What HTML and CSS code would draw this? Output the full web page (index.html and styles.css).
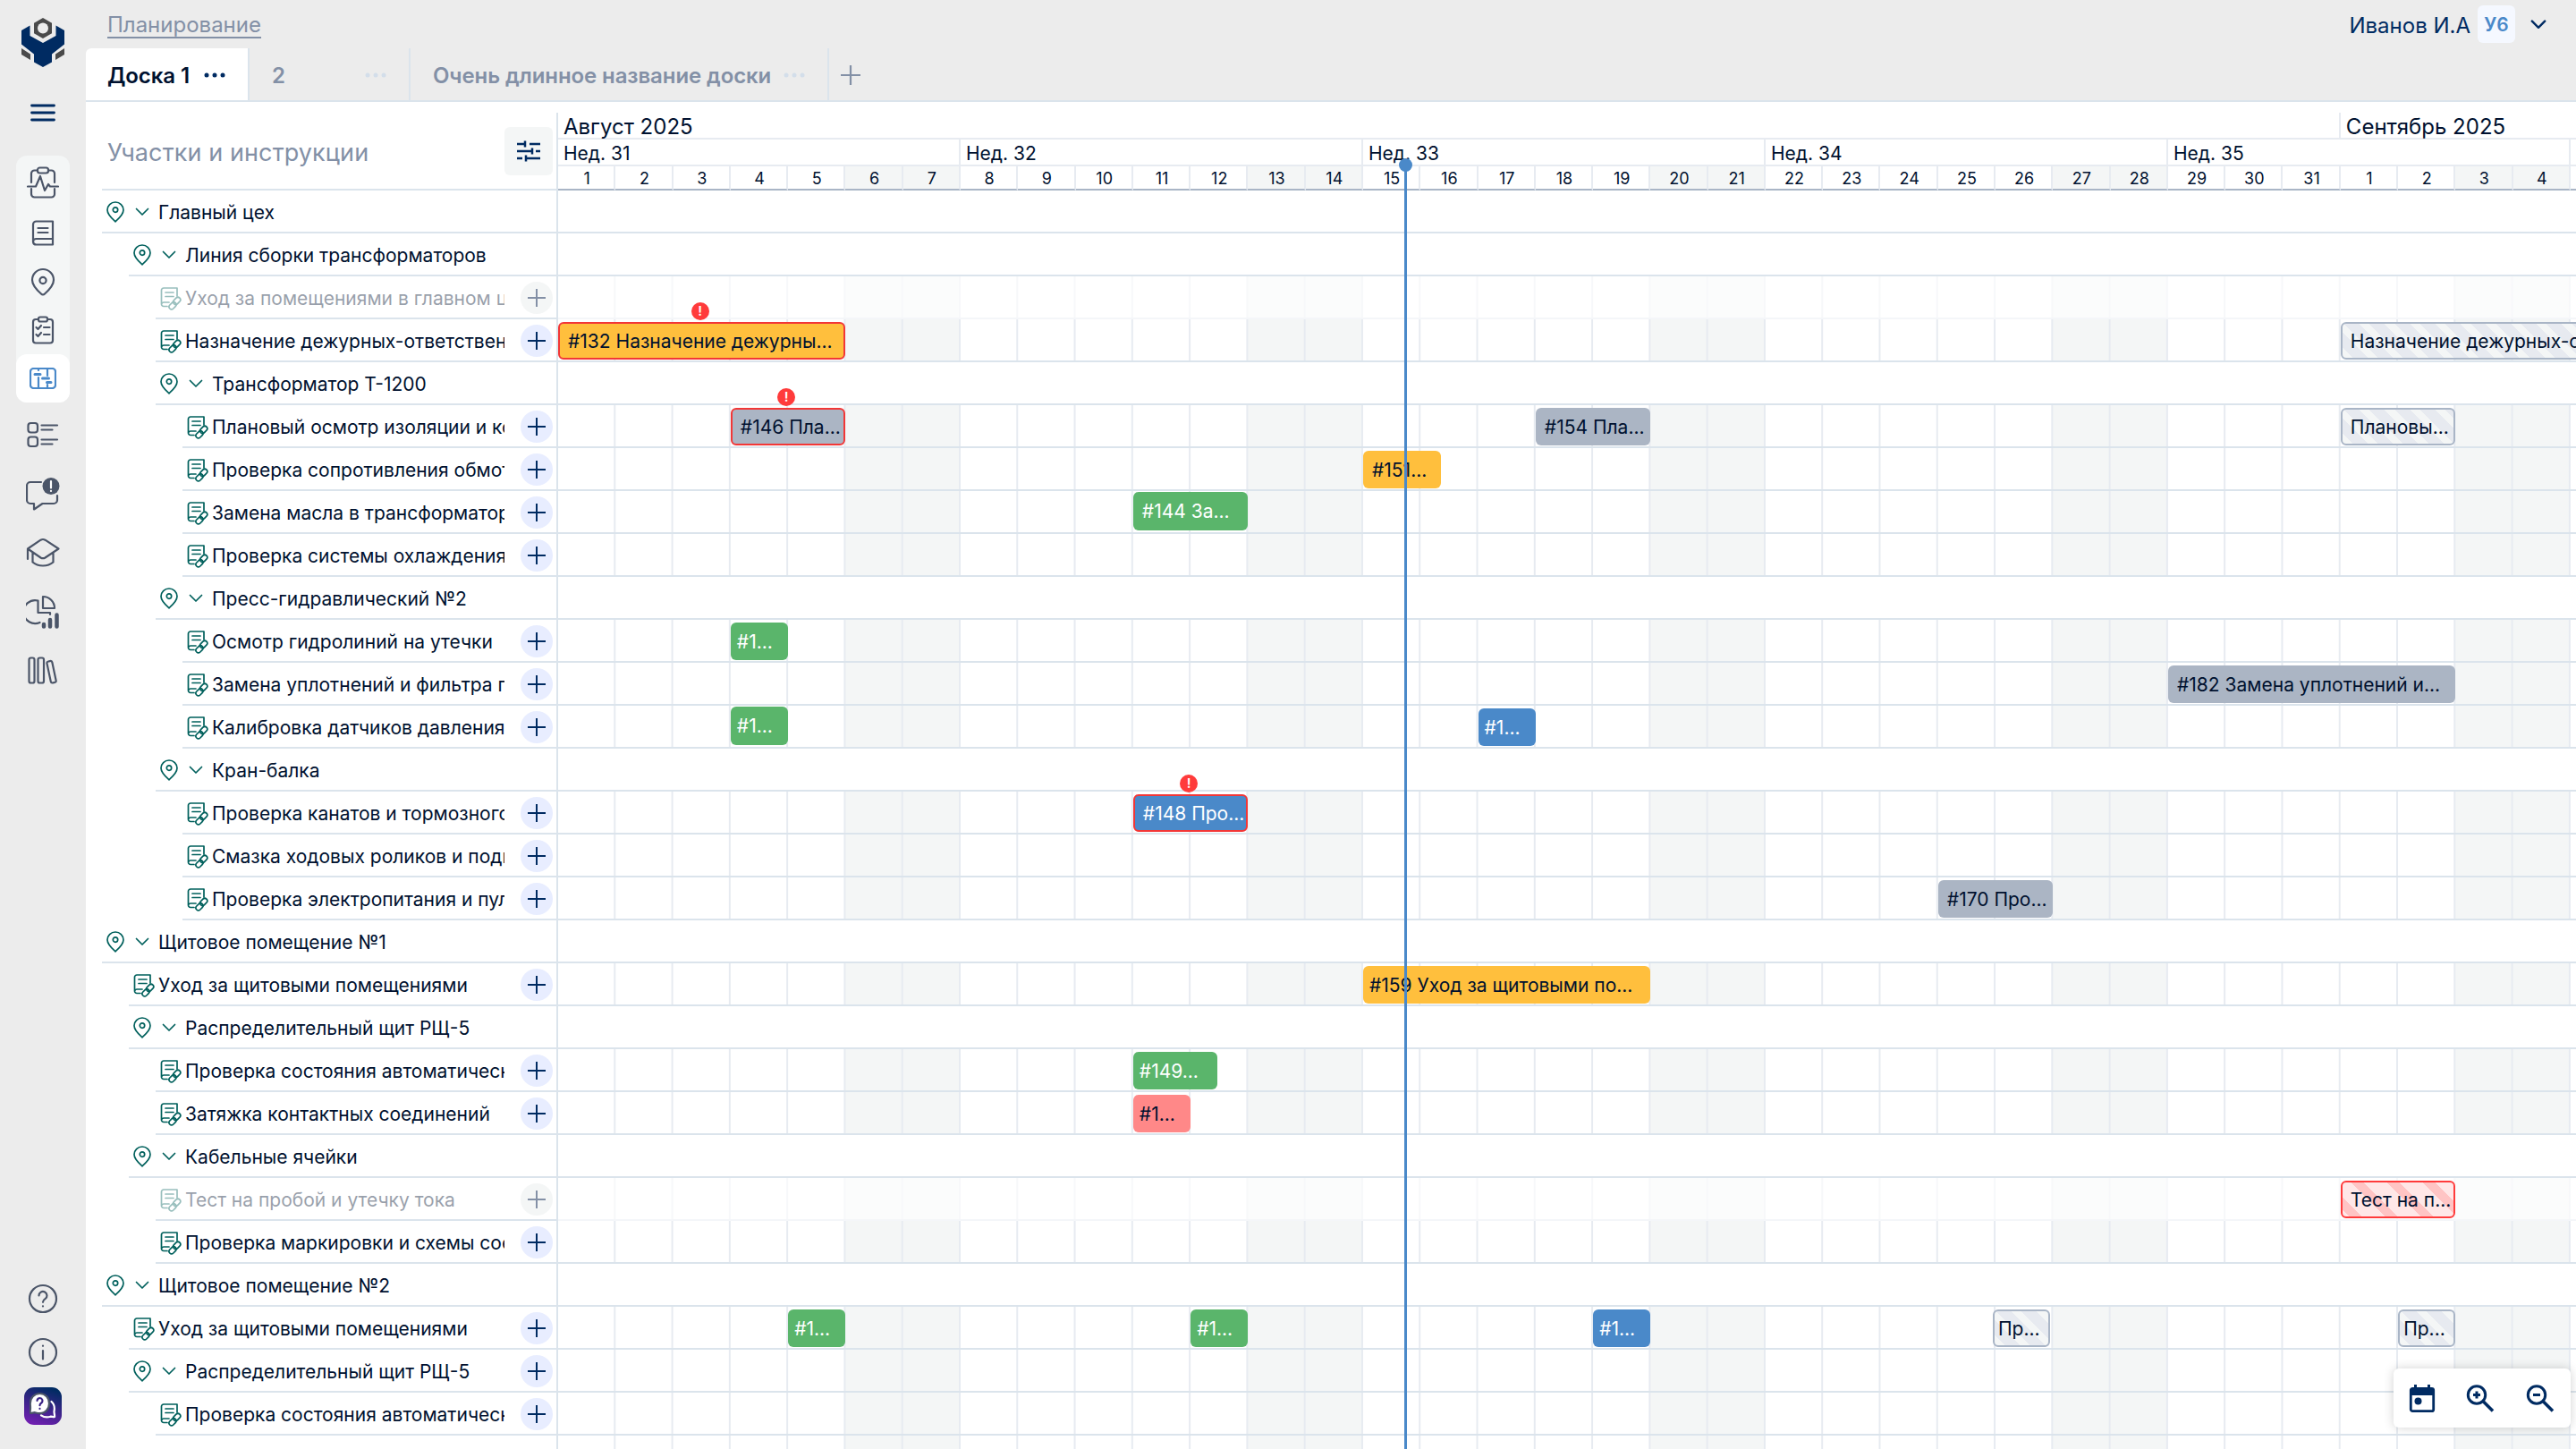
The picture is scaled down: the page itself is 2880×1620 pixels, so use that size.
FILE: index.html
```html
<!DOCTYPE html>
<html lang="ru">
<head>
    <meta charset="UTF-8">
    <meta name="viewport" content="width=device-width, initial-scale=1.0">
    <title>Планирование</title>
    <link rel="stylesheet" href="styles.css">
</head>
<body>
    <svg width="0" height="0" class="sprite">
        <symbol id="i-pin" viewBox="0 0 20 24">
            <path d="M10 22.8C7.5 20.6 1 15 1 9.8a9 8.8 0 0 1 18 0c0 5.200-6.500 10.800-9 13z"/>
            <circle cx="10" cy="9.600" r="2.700"/>
        </symbol>
        <symbol id="i-down" viewBox="0 0 16 10"><path d="M1.500 1.500 8 8l6.500-6.500"/></symbol>
        <symbol id="i-doc" viewBox="0 0 24 26">
            <path d="M8 21.500H4A2.500 2.500 0 0 1 1.500 19V3.500A2.500 2.500 0 0 1 4 1h15v9M1.800 18.500A2.500 2.500 0 0 1 4 17h6M6 6h9M6 10.500h9"/>
            <rect x="14.200" y="12.600" width="9" height="5.600" rx="2.800" transform="rotate(-45 18.700 15.400)"/>
            <rect x="9.500" y="18" width="9" height="5.600" rx="2.800" transform="rotate(-45 14 20.800)"/>
        </symbol>
        <symbol id="i-plus" viewBox="0 0 20 20"><path d="M10 .5v19M.5 10h19"/></symbol>
        <symbol id="i-dots" viewBox="0 0 24 6"><circle cx="3" cy="3" r="2.500"/><circle cx="12" cy="3" r="2.500"/><circle cx="21" cy="3" r="2.500"/></symbol>
    </svg>

    <div class="app">
        <aside class="sidebar">
            <svg class="logo" width="48" height="56" viewBox="0 0 48 56">
                <path d="M24 0 34 5.800v11.500L24 23l-10-5.700V5.800z" fill="#4a4a4a"/>
                <circle cx="24" cy="11.500" r="6" fill="#ececec"/>
                <path d="M0 14 9.500 8.500V20L24 28l14.500-8V8.500L48 14v15.500L34 40.500V49.500L24 55l-10-5.500v-9L0 29.500z" fill="#002b62"/>
                <path d="M0 34l10 6.500v6.500L0 41zM48 34l-10 6.500v6.500L48 41z" fill="#4a4a4a"/>
            </svg>
            <svg class="burger" width="28" height="22" viewBox="0 0 28 22"><path d="M1.500 2h25M1.500 10h25M1.500 18h25"/></svg>
            <nav class="nav-group">
                <a class="nav-item first">
                    <svg width="36" height="36" viewBox="0 0 36 36"><path d="M5 18V8a3.500 3.500 0 0 1 3.500-3.500H12M24 4.500h3.500A3.500 3.500 0 0 1 31 8v10M5 25v6a3.500 3.500 0 0 0 3.500 3.500h19A3.500 3.500 0 0 0 31 31v-6M1 22.500h9l5-11.500 5 16 4-7 2 2.500h9"/><rect x="12" y="1.500" width="12" height="6" rx="2.500"/></svg>
                </a>
                <a class="nav-item">
                    <svg width="26" height="30" viewBox="0 0 26 30"><path d="M2 24.500V5a3.500 3.500 0 0 1 3.500-3.500H24v26H5.500A3.500 3.500 0 0 1 2 24.500a3.500 3.500 0 0 1 3.500-3.500H24M7.500 9h11M7.500 14h11"/></svg>
                </a>
                <a class="nav-item">
                    <svg width="28" height="32" viewBox="0 0 28 32"><path d="M16 29.500c-1.200 1.200-2.800 1.200-4 0C7.500 25.500 2 20.500 2 14a12 12 0 0 1 24 0c0 6.500-5.500 11.500-10 15.500z"/><circle cx="14" cy="14.500" r="3.600"/></svg>
                </a>
                <a class="nav-item">
                    <svg width="26" height="32" viewBox="0 0 26 32"><path d="M8 4H5a3 3 0 0 0-3 3v20.500a3 3 0 0 0 3 3h16a3 3 0 0 0 3-3V7a3 3 0 0 0-3-3h-3M5.500 13l2 2 3.500-4M14 13h6.500M5.500 21l2 2 3.500-4M14 21h6.500"/><rect x="8" y="1.500" width="10" height="5" rx="2"/></svg>
                </a>
                <a class="nav-item active">
                    <svg width="30" height="24" viewBox="0 0 30 24"><rect x="1" y="1" width="28" height="22" rx="3.500"/><path d="M10 1v2M10 11v12M20 1v8M20 19v4" /><path d="M6 7.500h6M14.500 12h7M19.500 16.500h4.500" stroke-width="3"/></svg>
                </a>
            </nav>
            <nav class="nav-list">
                <a><svg width="36" height="30" viewBox="0 0 36 30"><rect x="1.500" y="2" width="10.500" height="10.500" rx="3"/><rect x="1.500" y="17.500" width="10.500" height="10.500" rx="3"/><path d="M16.500 4.500H34M16.500 9.500h12M16.500 20.500H34M16.500 25.500h12"/></svg></a>
                <a><svg width="38" height="38" viewBox="0 0 38 38"><path d="M17 6H5a4 4 0 0 0-4 4v16a4 4 0 0 0 4 4h4v6.500L18.500 30H31a4 4 0 0 0 4-4v-5"/><circle cx="28" cy="10.500" r="9.500" class="solid"/><path d="M28 5v7.500M28 15.800v.2" stroke="#fff"/></svg></a>
                <a><svg width="38" height="34" viewBox="0 0 38 34"><path d="M2 24V12.500L16.500 2.700q2.500-1.400 5 0L36.500 12.500 21.500 22.500q-2.500 1.400-5 0L2 12.500M7.500 17v10.500c6 5.300 17 5.300 23 0V17"/></svg></a>
                <a><svg width="38" height="38" viewBox="0 0 38 38"><path d="M13.500 6.500A13 13 0 1 0 15.500 31M13.500 6.500V20H27v2"/><path d="M19 2v13h13A13 13 0 0 0 19 2z"/><path d="M20 33v2.500M27 28v7.500M34.500 22.500v13" stroke-width="4.500"/></svg></a>
                <a><svg width="34" height="32" viewBox="0 0 34 32"><rect x="1.500" y="1.500" width="6" height="28" rx="2"/><rect x="11.500" y="1.500" width="6.500" height="28" rx="2"/><rect x="23.500" y="5" width="6" height="24.500" rx="2" transform="rotate(-12 26.500 17)"/></svg></a>
            </nav>
            <div class="nav-bottom">
                <svg width="34" height="34" viewBox="0 0 34 34"><circle cx="17" cy="17" r="15"/><path d="M12.500 13.500a4.500 4.500 0 1 1 7 3.700c-1.800 1.200-2.500 1.800-2.500 3.600M17 25.300v.2"/></svg>
                <svg width="34" height="34" viewBox="0 0 34 34"><circle cx="17" cy="17" r="15"/><path d="M17 15v9.500M17 9.500v.3"/></svg>
                <div class="support">
                    <svg width="30" height="30" viewBox="0 0 30 30"><path d="M11.500 1C5 1 .8 6 .8 12c0 3 .5 5 0 7.500-.3 2-.3 3.500.7 3.500s3-.8 4.500-.8c2 .6 3.500 1 5.500 1C18 23.200 22 18 22 12S18 1 11.500 1z" fill="#fff"/><path d="M24.500 10c4 3.500 3.500 8.500 3 11 0 2 .8 4.500.5 6-1.500.5-3-.5-4.500-.3-4 1.400-7.500.8-10.500-1.400" stroke="#fff"/><path d="M8.500 9a3 3 0 1 1 4.700 2.500c-1.300.9-1.700 1.300-1.700 2.700M11.500 17.800v.2" stroke="#3a2286"/></svg>
                </div>
            </div>
        </aside>

        <main class="main">
            <header class="topbar">
                <a class="page-title">Планирование</a>
                <div class="user">
                    <span class="user-name">Иванов И.А</span>
                    <span class="avatar">У6</span>
                    <svg class="user-arrow" width="18" height="11"><use href="#i-down"/></svg>
                </div>
            </header>

            <div class="tabs">
                <div class="tab active">Доска 1 <svg width="24" height="6"><use href="#i-dots"/></svg></div>
                <div class="tab short">2 <svg width="24" height="6"><use href="#i-dots"/></svg></div>
                <div class="tab long">Очень длинное название доски <svg width="24" height="6"><use href="#i-dots"/></svg></div>
                <svg class="add-tab" width="22" height="22"><use href="#i-plus"/></svg>
            </div>

            <div class="board">
                <section class="tree">
                    <div class="tree-head">
                        <span>Участки и инструкции</span>
                        <button class="filter-btn">
                            <svg width="28" height="24" viewBox="0 0 28 24"><path d="M1 4h9M15 4h12M10 .5v7M1 12h16M22 12h5M18 8.500v7M1 20h6M12 20h15M11 16.500v7"/></svg>
                        </button>
                    </div>
                    <div id="tree"></div>
                </section>
                <section class="timeline">
                    <div class="months"><div class="month august">Август 2025</div><div class="month">Сентябрь 2025</div></div>
                    <div class="weeks" id="weeks"></div>
                    <div class="days" id="days"></div>
                    <div id="rows"></div>
                    <div class="now"></div>
                </section>
            </div>
        </main>
    </div>

    <div class="toolbar">
        <svg width="30" height="34" viewBox="0 0 30 34"><path d="M7.500 1v5M22.500 1v5" stroke-width="3"/><rect x="2.300" y="5.300" width="25.400" height="25.400" rx="2" stroke-width="2.800"/><path d="M2 5h26v8H2z" class="fill"/><circle cx="10.500" cy="19.500" r="4" class="fill"/></svg>
        <svg width="34" height="34" viewBox="0 0 34 34"><circle cx="13" cy="12.500" r="9.700" stroke-width="3"/><path d="m20 19.500 11 11" stroke-width="3.600"/><path d="M13 8.500v8M9 12.500h8" stroke-width="3"/></svg>
        <svg width="34" height="34" viewBox="0 0 34 34"><circle cx="13" cy="12.500" r="9.700" stroke-width="3"/><path d="m20 19.500 11 11" stroke-width="3.600"/><path d="M9 12.500h8" stroke-width="3"/></svg>
    </div>

    <script src="script.js"></script>
</body>
</html>
```

FILE: styles.css
```css
* {
    box-sizing: border-box;
}
body {
    margin: 0;
    height: 100vh;
    overflow: hidden;
    background-color: #ececec;
    color: #00112f;
    font-family: Inter, "Noto Sans", sans-serif;
    font-size: 21px;
}
svg {
    display: block;
    flex-shrink: 0;
    fill: none;
    stroke: currentColor;
    stroke-width: 2;
    stroke-linecap: round;
    stroke-linejoin: round;
}
.sprite {
    position: absolute;
}
.app {
    display: flex;
    height: 100vh;
}

/* Боковое меню */
.sidebar {
    width: 96px;
    height: 100%;
    display: flex;
    flex-direction: column;
    align-items: center;
    padding: 20px 0 27px;
    color: #4b5568;
}
.sidebar svg {
    stroke-width: 2.200;
}
.sidebar .logo {
    stroke: none;
}
.sidebar .burger {
    margin-top: 40px;
    color: #002b62;
    stroke-width: 2.800;
}
.nav-group {
    width: 60px;
    margin-top: 36px;
    background-color: #f4f6f6;
    border-radius: 12px;
}
.nav-item {
    height: 54px;
    display: flex;
    align-items: center;
    justify-content: center;
}
.nav-item.first {
    height: 60px;
}
.nav-item.active {
    background-color: #ffffff;
    border-radius: 12px;
    color: #4a89c9;
}
.nav-list {
    margin-top: 3px;
}
.nav-list a {
    height: 66px;
    display: flex;
    align-items: center;
    justify-content: center;
}
.nav-list .solid {
    fill: currentColor;
    stroke: none;
}
.nav-bottom {
    margin-top: auto;
    display: flex;
    flex-direction: column;
    align-items: center;
    gap: 26px;
}
.nav-bottom .support {
    margin-top: -4px;
    width: 42px;
    height: 42px;
    border-radius: 11px;
    background: linear-gradient(20deg, #7a1fb8 0%, #3a2488 50%, #002b62 90%);
    display: flex;
    align-items: center;
    justify-content: center;
}

/* Шапка */
.main {
    flex: 1;
    min-width: 0;
    display: flex;
    flex-direction: column;
}
.topbar {
    height: 54px;
    display: flex;
    justify-content: space-between;
    padding: 6px 33px 0 24px;
    font-size: 24px;
}
.page-title {
    align-self: flex-start;
    height: 37px;
    line-height: 44px;
    color: #8390a6;
    border-bottom: 2px solid #8390a6;
}
.user {
    display: flex;
    align-items: center;
    height: 42px;
    color: #002b62;
}
.user-name {
    padding-top: 2px;
}
.avatar {
    width: 42px;
    height: 42px;
    margin: 0 17px 0 8px;
    line-height: 43px;
    text-align: center;
    font-size: 21px;
    font-weight: 600;
    color: #4a89c9;
    background-color: #f5f8ff;
    border-radius: 6px;
}
.user-arrow {
    stroke-width: 2.200;
}
.tabs {
    height: 60px;
    display: flex;
    border-bottom: 2px solid #dbe4ec;
    font-size: 24px;
    font-weight: 600;
    letter-spacing: -0.1px;
    color: #8390a6;
}
.tab {
    display: flex;
    align-items: center;
    justify-content: space-between;
    padding: 2px 25px 0 25px;
    border-right: 2px solid #dbe4ec;
}
.tab svg {
    fill: currentColor;
    stroke: none;
    color: #d3deea;
}
.tab.active {
    width: 183px;
    padding-left: 24px;
    background-color: #ffffff;
    color: #00112f;
    border-top-left-radius: 6px;
}
.tab.active svg {
    color: #002b62;
}
.tab.short {
    width: 180px;
}
.tab.long {
    width: 468px;
}
.add-tab {
    margin: 19px 0 0 13px;
}

/* Дерево участков */
.board {
    flex: 1;
    min-height: 0;
    display: flex;
    padding-top: 12px;
    background-color: #ffffff;
}
.tree {
    width: 528px;
    padding-left: 18px;
    border-right: 2px solid #dbe4ec;
}
.tree-head {
    height: 87px;
    display: flex;
    align-items: center;
    justify-content: space-between;
    padding: 1px 4px 0 6px;
    border-bottom: 2px solid #dbe4ec;
    font-size: 27px;
    letter-spacing: 0.1px;
    color: #8390a6;
}
.tree-head span {
    padding-top: 2px;
}
.filter-btn {
    width: 54px;
    height: 54px;
    padding: 0;
    display: flex;
    align-items: center;
    justify-content: center;
    border: none;
    border-radius: 6px;
    background-color: #f4f6f6;
    color: #002b62;
}
.filter-btn svg {
    stroke-width: 2.500;
    stroke-linecap: butt;
}
.node {
    height: 48px;
    display: flex;
    align-items: center;
    padding: 1px 4px 0 5px;
    border-bottom: 2px solid #dbe4ec;
}
.level-1 {
    margin-left: 30px;
}
.level-2 {
    margin-left: 60px;
}
.level-3 {
    margin-left: 90px;
}
.node svg {
    color: #00605c;
    stroke-width: 1.700;
}
.node .pin {
    width: 20px;
    height: 24px;
}
.node .down {
    width: 16px;
    height: 10px;
    margin: 0 10px 0 12px;
}
.node .doc {
    width: 24px;
    height: 26px;
    margin: 2px 4px 0 0;
}
.node-name {
    flex: 1;
    min-width: 0;
    margin-right: 18px;
    padding-top: 2px;
    overflow: hidden;
    white-space: nowrap;
    line-height: 40px;
}
.add-btn {
    width: 36px;
    height: 36px;
    display: flex;
    align-items: center;
    justify-content: center;
    border-radius: 50%;
    background-color: #e8edff;
}
.add-btn svg {
    width: 20px;
    height: 20px;
    color: #002b62;
    stroke-width: 2;
}
.node.off .doc,
.node.off .node-name {
    opacity: 0.4;
}
.node.off .add-btn {
    background-color: #f4f6f6;
}
.node.off .add-btn svg {
    color: #8390a6;
}

/* Шкала времени */
.timeline {
    flex: 1;
    min-width: 0;
    position: relative;
    overflow: hidden;
}
.months,
.weeks,
.days {
    display: flex;
    white-space: nowrap;
}
.month {
    width: 600px;
    height: 30px;
    flex-shrink: 0;
    padding-left: 6px;
    line-height: 32px;
    font-size: 24px;
    border-bottom: 2px solid #e7ebf1;
}
.month.august {
    width: 1992.860px;
    border-right: 2px solid #e7ebf1;
}
.week {
    width: 450px;
    height: 30px;
    flex-shrink: 0;
    padding-left: 6px;
    line-height: 32px;
    border-right: 2px solid #e7ebf1;
    border-bottom: 2px solid #e7ebf1;
}
.day {
    width: 64.286px;
    height: 27px;
    flex-shrink: 0;
    padding-left: 2px;
    line-height: 27px;
    text-align: center;
    font-size: 18px;
    border-right: 2px solid #e7ebf1;
    border-bottom: 2px solid #a9b5c6;
}
.day.weekend {
    background-color: #f4f6f6;
}
.row {
    position: relative;
    height: 48px;
}
.grid {
    height: 48px;
    border-bottom: 2px solid #dbe4ec;
}
.grid.cells {
    background-image:
        linear-gradient(to right, transparent 62.286px, #e7ebf1 62.286px),
        linear-gradient(to right, transparent 321.430px, #f4f6f6 321.430px);
    background-size: 64.286px 100%, 450px 100%;
}
.grid.off {
    opacity: 0.3;
}
.bar {
    position: absolute;
    top: 3px;
    height: 42px;
    padding-left: 10px;
    border-radius: 6px;
    line-height: 43px;
    white-space: nowrap;
    z-index: 1;
}
.bar.small {
    padding-left: 7px;
}
.bar.up {
    top: 1px;
    height: 43px;
}
.bar.yellow {
    background-color: #ffbf3d;
}
.bar.gray {
    background-color: #abb5c4;
}
.bar.green {
    background-color: #5ab56b;
    color: #ffffff;
}
.bar.blue {
    background-color: #4a89c9;
    color: #ffffff;
}
.bar.red {
    background-color: #ff8888;
}
.bar.plan {
    border: 2px solid #a9b5c6;
    background: repeating-linear-gradient(45deg, #f4f6f6 0 8px, #e7eaf0 8px 20px);
}
.bar.plan-late {
    border: 2px solid #ff3b3b;
    background: repeating-linear-gradient(45deg, #ffe7e7 0 5px, #ffc4c4 5px 15.500px, #ffe7e7 15.500px 28.300px);
}
.bar.late {
    border: 2px solid #f23737;
}
.bar.late,
.bar.plan,
.bar.plan-late {
    padding-left: 9px;
    line-height: 39px;
}
.bar.plan.small {
    padding-left: 4px;
}
.alert {
    position: absolute;
    top: -24px;
    left: 50%;
    width: 20px;
    height: 20px;
    margin-left: -12px;
    border-radius: 50%;
    background-color: #ff3b3b;
    color: #ffffff;
    font-size: 15px;
    font-weight: 600;
    line-height: 20px;
    text-align: center;
}
.now {
    position: absolute;
    top: 59px;
    bottom: 0;
    left: 946px;
    width: 3px;
    background-color: #4a89c9;
    z-index: 2;
}
.now::before {
    content: "";
    position: absolute;
    top: -8px;
    left: -6px;
    width: 15px;
    height: 15px;
    border-radius: 50%;
    background-color: #4a89c9;
}
.toolbar {
    position: absolute;
    right: 6px;
    bottom: 24px;
    width: 198px;
    height: 66px;
    display: flex;
    align-items: center;
    justify-content: space-around;
    padding-top: 1px;
    background-color: #ffffff;
    border-radius: 6px;
    box-shadow: 0 0 12px rgba(0, 0, 0, 0.18);
    color: #002b62;
    z-index: 3;
}
.toolbar svg {
    stroke-linecap: butt;
}
.toolbar .fill {
    fill: currentColor;
    stroke: none;
}
```

FILE: script.js
```js
const DAY = 450 / 7;

// bars: [начало, длительность в днях, текст, классы]
const rows = [
    { level: 0, place: true, name: 'Главный цех' },
    { level: 1, place: true, name: 'Линия сборки трансформаторов' },
    { level: 2, name: 'Уход за помещениями в главном цехе', off: true },
    { level: 2, name: 'Назначение дежурных-ответственных', bars: [
        [0, 5, '#132 Назначение дежурны...', 'yellow late'],
        [31, 6, 'Назначение дежурных-ответственных', 'plan']
    ] },
    { level: 2, place: true, name: 'Трансформатор Т-1200' },
    { level: 3, name: 'Плановый осмотр изоляции и контактов', bars: [
        [3, 2, '#146 Пла...', 'gray late'],
        [17, 2, '#154 Пла...', 'gray'],
        [31, 2, 'Плановы...', 'plan']
    ] },
    { level: 3, name: 'Проверка сопротивления обмоток', bars: [[14, 1.36, '#151...', 'yellow']] },
    { level: 3, name: 'Замена масла в трансформаторе', bars: [[10, 2, '#144 За...', 'green up']] },
    { level: 3, name: 'Проверка системы охлаждения' },
    { level: 2, place: true, name: 'Пресс-гидравлический №2' },
    { level: 3, name: 'Осмотр гидролиний на утечки', bars: [[3, 1, '#1...', 'green small']] },
    { level: 3, name: 'Замена уплотнений и фильтра гидравлики', bars: [[28, 5, '#182 Замена уплотнений и...', 'gray']] },
    { level: 3, name: 'Калибровка датчиков давления', bars: [
        [3, 1, '#1...', 'green small up'],
        [16, 1, '#1...', 'blue small']
    ] },
    { level: 2, place: true, name: 'Кран-балка' },
    { level: 3, name: 'Проверка канатов и тормозного механизма', bars: [[10, 2, '#148 Про...', 'blue late']] },
    { level: 3, name: 'Смазка ходовых роликов и подшипников' },
    { level: 3, name: 'Проверка электропитания и пульта', bars: [[24, 2, '#170 Про...', 'gray']] },
    { level: 0, place: true, name: 'Щитовое помещение №1' },
    { level: 1, name: 'Уход за щитовыми помещениями', bars: [[14, 5, '#159 Уход за щитовыми по...', 'yellow small']] },
    { level: 1, place: true, name: 'Распределительный щит РЩ-5' },
    { level: 2, name: 'Проверка состояния автоматических', bars: [[10, 1.46, '#149...', 'green small']] },
    { level: 2, name: 'Затяжка контактных соединений', bars: [[10, 1, '#1...', 'red small']] },
    { level: 1, place: true, name: 'Кабельные ячейки' },
    { level: 2, name: 'Тест на пробой и утечку тока', off: true, bars: [[31, 2, 'Тест на п...', 'plan-late']] },
    { level: 2, name: 'Проверка маркировки и схемы соединений' },
    { level: 0, place: true, name: 'Щитовое помещение №2' },
    { level: 1, name: 'Уход за щитовыми помещениями', bars: [
        [4, 1, '#1...', 'green small'],
        [11, 1, '#1...', 'green small'],
        [18, 1, '#1...', 'blue small'],
        [24.95, 1, 'Пр...', 'plan small'],
        [32, 1, 'Пр...', 'plan small']
    ] },
    { level: 1, place: true, add: true, name: 'Распределительный щит РЩ-5' },
    { level: 2, name: 'Проверка состояния автоматических' }
];

const icon = (id, cls) => `<svg class="${cls}"><use href="#i-${id}"/></svg>`;

function node(r) {
    const icons = r.place ? icon('pin', 'pin') + icon('down', 'down') : icon('doc', 'doc');
    const add = !r.place || r.add ? `<span class="add-btn">${icon('plus', '')}</span>` : '';
    return `<div class="node level-${r.level} ${r.off ? 'off' : ''}">${icons}<span class="node-name">${r.name}</span>${add}</div>`;
}

function bar([start, len, text, cls]) {
    const left = start * DAY;
    const width = len * DAY;
    const alert = cls.includes(' late') ? '<span class="alert">!</span>' : '';
    return `<div class="bar ${cls}" style="left:${left}px;width:${width}px">${text}${alert}</div>`;
}

function line(r) {
    const cells = !r.place || r.add ? 'cells' : '';
    return `<div class="row"><div class="grid ${cells} ${r.off ? 'off' : ''}"></div>${(r.bars || []).map(bar).join('')}</div>`;
}

document.getElementById('tree').innerHTML = rows.map(node).join('');
document.getElementById('rows').innerHTML = rows.concat({ level: 2 }).map(line).join('');

let weeks = '';
for (let w = 31; w <= 36; w++) {
    weeks += `<div class="week">Нед. ${w}</div>`;
}
document.getElementById('weeks').innerHTML = weeks;

let days = '';
for (let d = 0; d < 36; d++) {
    days += `<div class="day ${d % 7 > 4 ? 'weekend' : ''}">${d % 31 + 1}</div>`;
}
document.getElementById('days').innerHTML = days;
```
